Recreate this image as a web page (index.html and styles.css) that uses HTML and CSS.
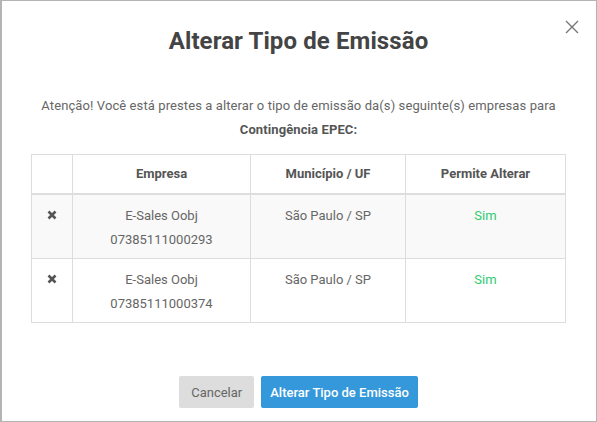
FILE: index.html
```html
<!DOCTYPE html>
<html lang="pt-BR">
<head>
<meta charset="utf-8">
<title>Alterar Tipo de Emissão</title>
<link rel="stylesheet" href="styles.css">
</head>
<body>
<div class="modal">
  <button class="close" aria-label="Fechar">
    <svg width="14" height="14" viewBox="0 0 14 14"><path d="M1 1 L13 13 M13 1 L1 13" stroke="#777" stroke-width="1.4" fill="none"/></svg>
  </button>
  <h2 class="title">Alterar Tipo de Emissão</h2>
  <p class="message">Atenção! Você está prestes a alterar o tipo de emissão da(s) seguinte(s) empresas para<br><strong>Contingência EPEC:</strong></p>
  <table class="grid">
    <thead>
      <tr><th class="c-icon"></th><th class="c-emp">Empresa</th><th class="c-mun">Município / UF</th><th class="c-perm">Permite Alterar</th></tr>
    </thead>
    <tbody>
      <tr>
        <td><svg class="x" width="10" height="10" viewBox="0 0 10 10"><path d="M1.5 1.5 L8.5 8.5 M8.5 1.5 L1.5 8.5" stroke="#555" stroke-width="2.6" fill="none"/></svg></td>
        <td>E-Sales Oobj<br>07385111000293</td>
        <td>São Paulo / SP</td>
        <td class="ok">Sim</td>
      </tr>
      <tr>
        <td><svg class="x" width="10" height="10" viewBox="0 0 10 10"><path d="M1.5 1.5 L8.5 8.5 M8.5 1.5 L1.5 8.5" stroke="#555" stroke-width="2.6" fill="none"/></svg></td>
        <td>E-Sales Oobj<br>07385111000374</td>
        <td>São Paulo / SP</td>
        <td class="ok">Sim</td>
      </tr>
    </tbody>
  </table>
  <div class="footer">
    <button class="btn btn-cancel">Cancelar</button>
    <button class="btn btn-primary">Alterar Tipo de Emissão</button>
  </div>
</div>
</body>
</html>
```

FILE: styles.css
```css
html, body {
  margin: 0;
  padding: 0;
  background: #fff;
}
body {
  font-family: Roboto, "Liberation Sans", Arial, sans-serif;
  font-size: 13px;
  color: #666;
}
.modal {
  position: relative;
  box-sizing: border-box;
  width: 597px;
  height: 422px;
  border: 1px solid #b4b4b4;
  border-left-width: 2px;
  display: flex;
  flex-direction: column;
  padding: 0 30px 0 29px;
}
.close {
  position: absolute;
  top: 19px;
  right: 17px;
  border: 0;
  background: none;
  padding: 0;
  width: 14px;
  height: 14px;
  cursor: pointer;
}
.close svg { display: block; }
.title {
  margin: 26px 0 0;
  text-align: center;
  font-size: 24px;
  line-height: 28px;
  font-weight: 700;
  color: #444;
  letter-spacing: 0.1px;
}
.message {
  margin: 39px 0 0;
  text-align: center;
  line-height: 24px;
  color: #666;
  letter-spacing: 0.1px;
}
.message strong {
  color: #555;
  font-weight: 700;
}
.grid {
  margin-top: 12px;
  width: 100%;
  border-collapse: collapse;
  border: 1px solid #ddd;
}
.grid th, .grid td {
  border: 1px solid #ddd;
  text-align: center;
  line-height: 24px;
  vertical-align: top;
}
.grid th {
  padding: 7px 8px;
  color: #555;
  font-weight: 700;
  border-bottom: 2px solid #ddd;
}
.grid td {
  padding: 9px 8px 6px;
  color: #666;
}
.grid tbody tr:nth-child(odd) td {
  background: #f9f9f9;
}
.c-icon { width: 24px; }
.c-emp { width: 161px; }
.c-mun { width: 138px; }
.x {
  display: inline-block;
  vertical-align: middle;
  margin-top: -3px;
}
.grid td.ok {
  color: #2ecc71;
}
.footer {
  margin-top: auto;
  padding-bottom: 13px;
  display: flex;
  justify-content: center;
  gap: 7px;
}
.btn {
  font-family: Roboto, "Liberation Sans", Arial, sans-serif;
  font-size: 13px;
  height: 32px;
  border: 0;
  border-radius: 2px;
  padding: 0 12px;
  cursor: pointer;
}
.btn-cancel {
  background: #ddd;
  color: #666;
}
.btn-primary {
  background: #3498db;
  color: #fff;
  font-weight: 500;
  padding: 0 9px;
}
```
